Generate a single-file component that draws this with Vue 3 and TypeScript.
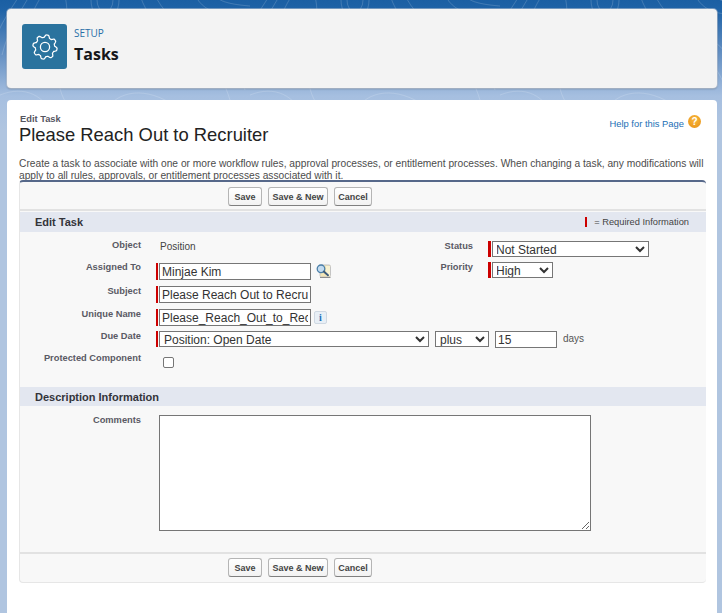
<script setup lang="ts">
const buttons: string[] = ['Save', 'Save & New', 'Cancel']

function gearPath(): string {
  const pts: string[] = []
  const n = 160
  for (let i = 0; i < n; i++) {
    const t = (i / n) * Math.PI * 2
    const wave = Math.max(-1, Math.min(1, Math.cos(t * 8 - Math.PI / 2) * 1.5))
    const r = 10.9 + 1.25 * wave
    pts.push(`${(13 + r * Math.cos(t)).toFixed(2)} ${(13 + r * Math.sin(t)).toFixed(2)}`)
  }
  return `M${pts.join('L')}Z`
}
const gear = gearPath()
</script>

<template>
  <div class="page">
    <header class="head-card">
      <div class="head-icon">
        <svg width="26" height="26" viewBox="0 0 26 26" fill="none" stroke="#fff" stroke-width="1.25">
          <path :d="gear" />
          <circle cx="13" cy="13" r="4.6" />
        </svg>
      </div>
      <div class="head-text">
        <div class="head-sub">SETUP</div>
        <h1 class="head-title">Tasks</h1>
      </div>
    </header>

    <main class="main-card">
      <div class="title-row">
        <div>
          <div class="crumb">Edit Task</div>
          <h2 class="title">Please Reach Out to Recruiter</h2>
        </div>
        <div class="help">
          <a class="help-link">Help for this Page</a>
          <span class="help-icon">?</span>
        </div>
      </div>
      <p class="desc">Create a task to associate with one or more workflow rules, approval processes, or entitlement processes. When changing a task, any modifications will apply to all rules, approvals, or entitlement processes associated with it.</p>

      <section class="panel">
        <div class="btn-row top">
          <button v-for="b in buttons" :key="b" class="btn" type="button">{{ b }}</button>
        </div>

        <div class="sec-head first">
          <span>Edit Task</span>
          <span class="req-note"><i class="req-mark"></i>= Required Information</span>
        </div>

        <div class="form">
          <div class="row r-object">
            <div class="left">
              <label class="lbl">Object</label>
              <span class="val-plain">Position</span>
            </div>
            <label class="lbl lbl2">Status</label>
            <span class="req req-right"><select class="sel status"><option>Not Started</option></select></span>
          </div>
          <div class="row r-assigned">
            <div class="left">
              <label class="lbl">Assigned To</label>
              <span class="req"><input class="inp" value="Minjae Kim" /></span>
              <svg class="lookup" width="15" height="14" viewBox="0 0 15 14">
                <rect x="4" y="1" width="10.5" height="12" rx="1.5" fill="#f3e6b6" stroke="#c4c4c4" />
                <rect x="10" y="2" width="4" height="10" fill="#f9f2d2" />
                <path d="M4 13.5h10.5" stroke="#8d8d8d" />
                <circle cx="5" cy="4.8" r="3.8" fill="#c4dcf0" stroke="#4b7fa8" stroke-width="1.3" />
                <path d="M7.8 7.6l4.2 3.6" stroke="#3d5a78" stroke-width="2" stroke-linecap="round" />
              </svg>
            </div>
            <label class="lbl lbl2">Priority</label>
            <span class="req req-right"><select class="sel prio"><option>High</option></select></span>
          </div>
          <div class="row r-subject">
            <label class="lbl">Subject</label>
            <span class="req"><input class="inp" value="Please Reach Out to Recruiter" /></span>
          </div>
          <div class="row r-unique">
            <label class="lbl">Unique Name</label>
            <span class="req"><input class="inp" value="Please_Reach_Out_to_Recruiter" /></span>
            <span class="info">i</span>
          </div>
          <div class="row r-due">
            <label class="lbl">Due Date</label>
            <span class="req"><select class="sel due"><option>Position: Open Date</option></select></span>
            <select class="sel plus"><option>plus</option></select>
            <input class="inp days" value="15" />
            <span class="days-lbl">days</span>
          </div>
          <div class="row r-protected">
            <label class="lbl">Protected Component</label>
            <input class="check" type="checkbox" />
          </div>
        </div>

        <div class="sec-head second"><span>Description Information</span></div>

        <div class="row r-comments">
          <label class="lbl">Comments</label>
          <textarea class="area"></textarea>
        </div>

        <div class="btn-row bottom">
          <button v-for="b in buttons" :key="b" class="btn" type="button">{{ b }}</button>
        </div>
      </section>
    </main>
  </div>
</template>

<style>
html, body { margin: 0; height: 100%; overflow: hidden; }
</style>

<style scoped>
* { box-sizing: border-box; }
.page {
  height: 613px;
  overflow: hidden;
  padding: 9px 5px 0 7px;
  font-family: "Liberation Sans", Arial, sans-serif;
  background:
    url("data:image/svg+xml;utf8,<svg xmlns='http://www.w3.org/2000/svg' width='250' height='120'><g fill='none' stroke='white' stroke-opacity='.16' stroke-width='1'><path d='M20 -5C10 10 0 25 -5 40'/><path d='M30 -5C20 12 8 30 2 55'/><path d='M42 -5C30 15 20 40 10 70'/><ellipse cx='105' cy='0' rx='14' ry='20'/><ellipse cx='105' cy='0' rx='8' ry='12'/><path d='M65 -5C70 20 66 45 60 70C56 90 65 105 80 120'/><path d='M140 -5C146 15 160 30 180 40C205 50 225 70 235 120'/><path d='M155 -5C162 10 172 20 190 28C215 38 235 55 245 90'/><path d='M195 -5C200 5 208 12 225 14C240 16 248 20 250 24'/><path d='M215 -5C218 0 225 4 250 6'/><path d='M0 95C25 85 45 95 55 120'/><path d='M100 120C110 95 135 85 165 100C180 108 190 115 195 120'/></g></svg>") 0 0 repeat-x,
    linear-gradient(180deg, #1b5fa3 0, #1f63a7 10px, #5f8cc0 50px, #a6bfe0 96px, #b0c5e0 130px);
}
.head-card {
  height: 79px;
  display: flex;
  align-items: flex-start;
  padding: 15px 15px 0;
  background: #f3f3f3;
  border-radius: 4px;
  box-shadow: 0 0 0 1px rgba(200, 205, 215, .5), 0 1px 2px rgba(0, 0, 0, .3);
}
.head-icon {
  width: 45px;
  height: 45px;
  background: #2a739e;
  border-radius: 3px;
  display: flex;
  align-items: center;
  justify-content: center;
}
.head-text { margin-left: 7px; }
.head-sub { font-family: "Open Sans", sans-serif; font-size: 10px; line-height: 14px; color: #2a6fa8; margin-top: 2px; }
.head-title { margin: 3px 0 0; font-family: "Open Sans", sans-serif; font-size: 16px; line-height: 22px; font-weight: 700; color: #16171a; }

.main-card {
  margin-top: 12px;
  height: 520px;
  background: #fff;
  border-radius: 4px 4px 0 0;
  padding: 14px 11px 0 12px;
}
.title-row { display: flex; justify-content: space-between; align-items: flex-start; height: 36px; }
.crumb { font-size: 9.3px; font-weight: 700; line-height: 10px; color: #55555f; margin-left: 1px; }
.title { margin: 0; font-size: 18.4px; line-height: 21px; font-weight: 400; color: #222; }
.help { display: flex; align-items: flex-start; margin-top: 1px; padding-right: 5px; }
.help-link { font-size: 9.4px; line-height: 11px; margin-top: 3px; color: #1b6fb5; }
.help-icon {
  width: 13px; height: 13px; margin-left: 4px; border-radius: 50%;
  background: radial-gradient(circle at 50% 35%, #f9b83c, #e68f14); color: #fff; font-size: 10px; font-weight: 700; line-height: 13px; text-align: center;
}
.desc { margin: 8px 0 0; font-size: 10.22px; line-height: 12px; color: #4c4c4c; }

.panel {
  margin-top: -2px;
  position: relative;
  width: 687px;
  height: 403px;
  background: #f8f8f8;
  border-top: 2px solid #56688a;
  border-left: 1px solid #e6e6e6;
  border-bottom: 1px solid #e6e6e6;
  border-radius: 4px;
}
.btn-row { display: flex; gap: 6px; padding-left: 208px; }
.btn-row.top { height: 29px; padding-top: 5px; border-bottom: 2px solid #e2e2e2; }
.btn-row.bottom { height: 30px; padding-top: 4px; border-top: 2px solid #e2e2e2; }
.btn {
  height: 19px; padding: 0 2px; width: 34px;
  font-family: "Liberation Sans", Arial, sans-serif; font-size: 9px; font-weight: 700; color: #444;
  background: linear-gradient(#fff, #f2f2f2); border: 1px solid #b5b5b5; border-bottom-color: #7f7f7f; border-radius: 3px;
}
.btn:nth-child(2) { width: 60px; }
.btn:nth-child(3) { width: 38px; }
.sec-head {
  display: flex; justify-content: space-between; align-items: center;
  background: #e3e7f0; padding: 0 17px 0 15px; font-size: 11px; font-weight: 700; color: #33343a;
}
.sec-head.first { height: 20px; margin-top: 1px; }
.sec-head.second { height: 19px; }
.req-note { display: flex; align-items: center; font-size: 9.3px; font-weight: 400; color: #444; }
.req-mark { width: 2px; height: 10px; background: #c00; margin-right: 7px; }

.form { height: 155px; }
.row { display: flex; align-items: flex-start; }
.left { display: flex; align-items: flex-start; width: 341px; }
.lbl { width: 121px; flex: none; text-align: right; font-size: 9.3px; font-weight: 700; line-height: 11px; color: #5a5a64; margin-top: 1px; }
.lbl2 { width: 112px; }
.r-object .left .lbl, .r-due .lbl { margin-top: 0; }
.val-plain { margin-left: 19px; font-size: 10px; color: #444; line-height: 11px; margin-top: 1px; }
.req { margin-left: 15px; padding-left: 1px; border-left: 2px solid #c00; display: inline-flex; margin-top: 1px; }
.req-right { border-left-width: 3px; }
.inp {
  width: 152px; height: 17px; padding: 0 2px; border: 1px solid #767676; background: #fff;
  font-family: "Liberation Sans", Arial, sans-serif; font-size: 12px; color: #333; border-radius: 0; outline: none;
}
.sel {
  height: 16px; padding: 0; border: 1px solid #767676; background: #fff; display: block;
  font-family: "Liberation Sans", Arial, sans-serif; font-size: 12px; color: #333; border-radius: 0;
}
.status { width: 157px; text-indent: -1px; }
.prio { width: 61px; text-indent: -1px; }
.due { width: 270px; }
.plus { width: 54px; margin-left: 6px; flex: none; }
.days { width: 62px; margin-left: 6px; flex: none; }
.days-lbl { margin-left: 6px; font-size: 10px; color: #555; line-height: 16px; }
.lookup { margin-left: 5px; margin-top: 3px; }
.info {
  width: 13px; height: 13px; margin-left: 3px; margin-top: 3px; border-radius: 2px; background: #e8eff6; border: 1px solid #cfd8e2;
  color: #1a6fb8; font-size: 10px; font-weight: 700; font-family: "Liberation Serif", serif; line-height: 11px; text-align: center;
}
.r-object { height: 29px; padding-top: 8px; }
.r-assigned { height: 24px; }
.r-assigned .req:not(.req-right) { margin-top: 2px; }
.r-subject { height: 23px; }
.r-unique { height: 23px; }
.r-due { height: 21px; }
.r-due .req { margin-top: 0; }
.check { width: 11px; height: 11px; margin: 5px 0 0 22px; appearance: none; background: #fff; border: 1px solid #767676; border-radius: 2px; }
.r-comments { height: 146px; padding-top: 8px; }
.area { width: 432px; height: 116px; margin: 1px 0 0 18px; border: 1px solid #767676; background: #fff; border-radius: 0; display: block; flex: none; }
</style>
